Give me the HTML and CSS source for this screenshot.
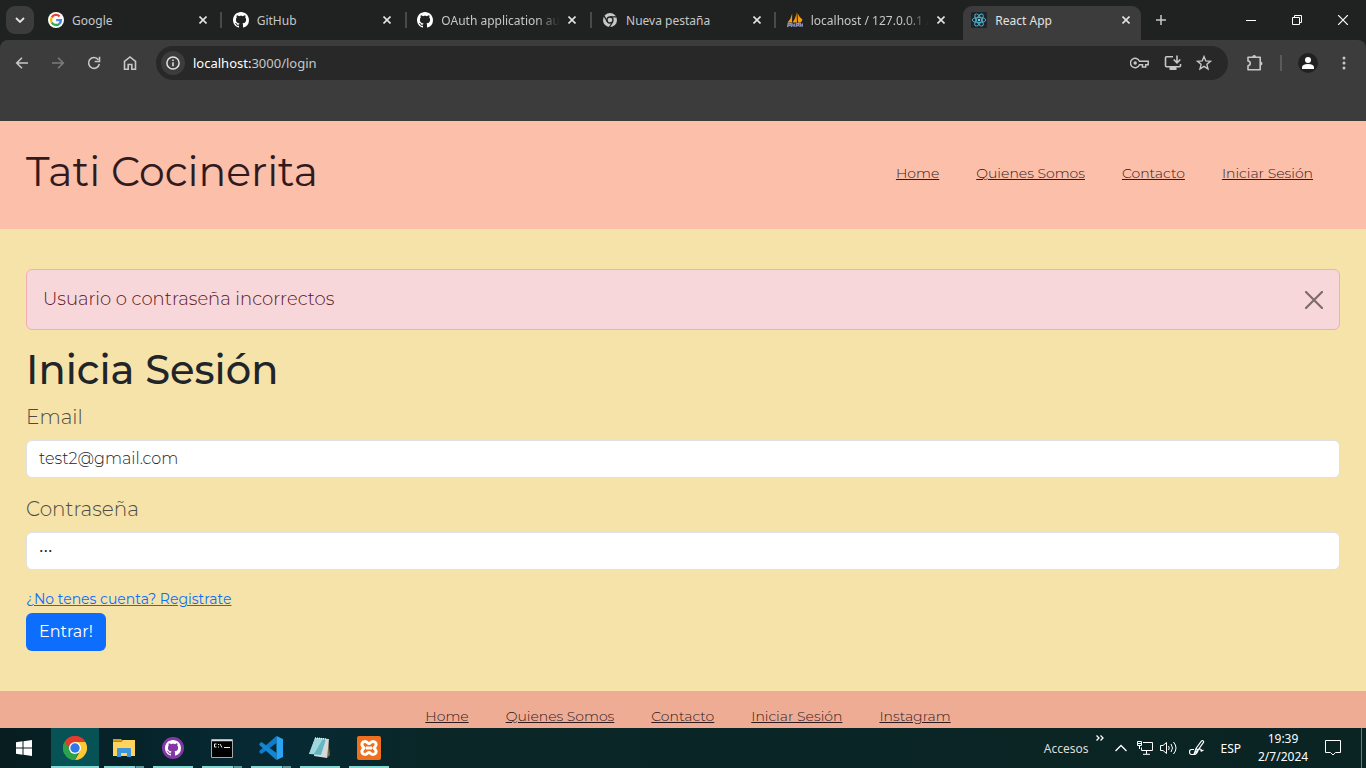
FILE: index.html
```html
<!DOCTYPE html>
<html lang="es">
<head>
<meta charset="utf-8">
<meta name="viewport" content="width=device-width, initial-scale=1">
<title>React App</title>
<link rel="stylesheet" href="styles.css">
</head>
<body>
<svg class="defs" aria-hidden="true">
  <symbol id="cross" viewBox="0 0 8 8"><path d="M.5.5l7 7M7.5.5l-7 7" fill="none" stroke="currentColor" stroke-width="1.6"/></symbol>
  <symbol id="github" viewBox="0 0 16 16"><path fill="currentColor" d="M8 0C3.58 0 0 3.58 0 8c0 3.54 2.29 6.53 5.47 7.59.4.07.55-.17.55-.38 0-.19-.01-.82-.01-1.49-2.01.37-2.53-.49-2.69-.94-.09-.23-.48-.94-.82-1.13-.28-.15-.68-.52-.01-.53.63-.01 1.08.58 1.23.82.72 1.21 1.87.87 2.33.66.07-.52.28-.87.51-1.07-1.78-.2-3.64-.89-3.64-3.95 0-.87.31-1.59.82-2.15-.08-.2-.36-1.02.08-2.12 0 0 .67-.21 2.2.82.64-.18 1.32-.27 2-.27s1.36.09 2 .27c1.53-1.04 2.2-.82 2.2-.82.44 1.1.16 1.92.08 2.12.51.56.82 1.27.82 2.15 0 3.07-1.87 3.75-3.65 3.95.29.25.54.73.54 1.48 0 1.07-.01 1.93-.01 2.2 0 .21.15.46.55.38A8.01 8.01 0 0 0 16 8c0-4.42-3.58-8-8-8z"/></symbol>
</svg>

<div class="browser">
  <div class="tabstrip">
    <button class="tab-search" aria-label="Buscar pestañas"><svg width="10" height="6" viewBox="0 0 10 6"><path d="M1 1l4 4 4-4" fill="none" stroke="#e3e3e3" stroke-width="1.8"/></svg></button>
    <div class="tabs">
      <div class="tab">
        <svg class="fav" viewBox="0 0 16 16"><circle cx="8" cy="8" r="8" fill="#fff"/><g fill="none" stroke-width="2.3"><path d="M11.6 4.4A5 5 0 0 0 3.7 5.5" stroke="#ea4335"/><path d="M3.7 5.5a5 5 0 0 0 0 5" stroke="#fbbc05"/><path d="M3.7 10.5a5 5 0 0 0 7.6 1.3" stroke="#34a853"/><path d="M11.3 11.8A5 5 0 0 0 13 8.1H8.2" stroke="#4285f4"/></g></svg>
        <span class="title">Google</span><button class="close" aria-label="Cerrar"><svg><use href="#cross"/></svg></button>
      </div>
      <i class="sep"></i>
      <div class="tab">
        <svg class="fav white"><use href="#github"/></svg>
        <span class="title">GitHub</span><button class="close" aria-label="Cerrar"><svg><use href="#cross"/></svg></button>
      </div>
      <i class="sep"></i>
      <div class="tab">
        <svg class="fav white"><use href="#github"/></svg>
        <span class="title fade">OAuth application aut</span><button class="close" aria-label="Cerrar"><svg><use href="#cross"/></svg></button>
      </div>
      <i class="sep"></i>
      <div class="tab">
        <svg class="fav" viewBox="0 0 16 16"><circle cx="8" cy="8" r="7" fill="#c7c7c7"/><circle cx="8" cy="8" r="3" fill="#c7c7c7" stroke="#202221" stroke-width="1.3"/><path d="M8 4.9h6.600M5.300 9.600L2 3.900M10.700 9.600l-3.300 5.700" stroke="#202221" stroke-width="1.2"/></svg>
        <span class="title">Nueva pestaña</span><button class="close" aria-label="Cerrar"><svg><use href="#cross"/></svg></button>
      </div>
      <i class="sep"></i>
      <div class="tab">
        <svg class="fav" viewBox="0 0 16 16"><path d="M.5 10.500Q4 7 5.200 1.500L5 10.500zM5.500 10.500Q9 6 9.500 0L10 10.500zM10.500 1Q12 5 15.500 7.500L14 10.500h-3z" fill="#f89c0e"/><path d="M.5 15l.7-3.500h2.300l-.5 2H1M5 11l-.5 4M7.500 11.500L7 15M5 13.200h2.300M9 15l.5-3.500h2.500l-.5 2H9.500M13.500 11l-.5 4M15.500 11.500L15 15M13.500 13.200h2" fill="none" stroke="#8c91bd" stroke-width="1.300"/></svg>
        <span class="title fade">localhost / 127.0.0.1 /</span><button class="close" aria-label="Cerrar"><svg><use href="#cross"/></svg></button>
      </div>
      <i class="sep hidden"></i>
      <div class="tab active">
        <svg class="fav" viewBox="0 0 16 16"><rect width="16" height="16" rx="1.500" fill="#20232a"/><g fill="none" stroke="#4fb8d0" stroke-width=".9"><ellipse cx="8" cy="8" rx="6.800" ry="2.600"/><ellipse cx="8" cy="8" rx="6.800" ry="2.600" transform="rotate(60 8 8)"/><ellipse cx="8" cy="8" rx="6.800" ry="2.600" transform="rotate(120 8 8)"/></g><circle cx="8" cy="8" r="1.200" fill="#61dafb"/></svg>
        <span class="title">React App</span><button class="close" aria-label="Cerrar"><svg><use href="#cross"/></svg></button>
      </div>
    </div>
    <button class="new-tab" aria-label="Nueva pestaña"><svg width="10" height="10" viewBox="0 0 10 10"><path d="M5 0v10M0 5h10" stroke="#c7c7c7" stroke-width="1.500"/></svg></button>
    <div class="window-buttons">
      <button aria-label="Minimizar"><svg width="10" height="10" viewBox="0 0 10 10"><path d="M0 5.500h10" stroke="#fff"/></svg></button>
      <button aria-label="Restaurar"><svg width="10" height="10" viewBox="0 0 10 10"><path d="M.5 2.500h7v7h-7zM2.500 2.500v-2h7v7h-2" fill="none" stroke="#fff"/></svg></button>
      <button aria-label="Cerrar ventana"><svg width="10" height="10" viewBox="0 0 10 10"><path d="M0 0l10 10M10 0L0 10" stroke="#fff" stroke-width="1.200"/></svg></button>
    </div>
  </div>
  <div class="toolbar">
    <div class="nav-buttons">
      <button aria-label="Atrás"><svg width="16" height="16" viewBox="0 0 16 16"><path d="M14 8H3M8 2.700L2.700 8 8 13.300" fill="none" stroke="#c7c7c7" stroke-width="1.600"/></svg></button>
      <button aria-label="Adelante"><svg width="16" height="16" viewBox="0 0 16 16"><path d="M2 8h11M8 2.700L13.300 8 8 13.300" fill="none" stroke="#7b7b7b" stroke-width="1.600"/></svg></button>
      <button aria-label="Recargar"><svg width="16" height="16" viewBox="0 0 16 16"><path d="M13.300 9A5.400 5.400 0 1 1 12.300 4.700M13.500 1.700v4.800H8.700" fill="none" stroke="#c7c7c7" stroke-width="1.600"/></svg></button>
      <button aria-label="Inicio"><svg width="16" height="16" viewBox="0 0 16 16"><path d="M2.500 14.200V6.500L8 2l5.500 4.500v7.700H9.800V9.500H6.200v4.700z" fill="none" stroke="#c7c7c7" stroke-width="1.600"/></svg></button>
    </div>
    <div class="omnibox">
      <button class="info" aria-label="Información del sitio"><svg width="14" height="14" viewBox="0 0 14 14"><circle cx="7" cy="7" r="6.100" fill="none" stroke="#e3e3e3" stroke-width="1.500"/><path d="M7 6.200v4M7 3.500v1.500" stroke="#e3e3e3" stroke-width="1.500"/></svg></button>
      <span class="url"><b>localhost:</b>3000/login</span>
      <button aria-label="Contraseñas"><svg width="20" height="12" viewBox="0 0 20 12"><path d="M9.500 4.200A4.700 4.700 0 1 0 9.500 7.800H12.500v2.200h3.200V7.800h2.500V4.200z" fill="none" stroke="#c7c7c7" stroke-width="1.500"/><circle cx="5.200" cy="6" r="1.700" fill="#c7c7c7"/></svg></button>
      <button aria-label="Instalar"><svg width="18" height="16" viewBox="0 0 18 16"><path d="M9 1.800H2.500q-1 0-1 1v8q0 1 1 1h13q1 0 1-1V9" fill="none" stroke="#c7c7c7" stroke-width="1.600"/><path d="M5.500 12h7v3h-7z" fill="#c7c7c7"/><path d="M13 .5V7.500M9.700 4.500L13 7.800l3.300-3.300" fill="none" stroke="#c7c7c7" stroke-width="1.600"/></svg></button>
      <button aria-label="Favorito"><svg width="16" height="16" viewBox="0 0 16 16"><path d="M8 1.600l1.800 4.300 4.700.4-3.600 3 1.100 4.600L8 11.400l-4 2.500 1.100-4.600-3.600-3 4.700-.4z" fill="none" stroke="#c7c7c7" stroke-width="1.400"/></svg></button>
    </div>
    <div class="actions">
      <button aria-label="Extensiones"><svg width="18" height="18" viewBox="0 0 18 18"><path d="M2 3.200h12.200v12.500H2v-4c3-.2 3-4.500 0-4.700z" fill="none" stroke="#c7c7c7" stroke-width="1.600" stroke-linejoin="round"/><path d="M6.300 3a1.900 1.900 0 0 1 3.800 0zM14.500 7.500a1.900 1.900 0 0 1 0 3.900z" fill="#c7c7c7"/></svg></button>
      <i class="divider"></i>
      <button class="avatar" aria-label="Perfil"><svg width="20" height="20" viewBox="0 0 20 20"><circle cx="10" cy="10" r="10" fill="#202221"/><circle cx="10" cy="7" r="3" fill="#fff"/><path d="M4 16v-1.500q0-3.500 6-3.500t6 3.500V16z" fill="#fff"/></svg></button>
      <button aria-label="Menú"><svg width="4" height="14" viewBox="0 0 4 14"><g fill="#c7c7c7"><circle cx="2" cy="2" r="1.500"/><circle cx="2" cy="7" r="1.500"/><circle cx="2" cy="12" r="1.500"/></g></svg></button>
    </div>
  </div>
</div>

<div class="viewport">
  <header class="site-header">
    <h1>Tati Cocinerita</h1>
    <nav class="links">
      <a href="#">Home</a><a href="#">Quienes Somos</a><a href="#">Contacto</a><a href="#">Iniciar Sesión</a>
    </nav>
  </header>
  <main>
    <div class="alert" role="alert">
      <span>Usuario o contraseña incorrectos</span>
      <button aria-label="Cerrar aviso"><svg width="18" height="18" viewBox="0 0 18 18"><path d="M1 1l16 16M17 1L1 17" stroke="#7b6b6d" stroke-width="2.200" stroke-linecap="round"/></svg></button>
    </div>
    <h1>Inicia Sesión</h1>
    <form>
      <label for="email">Email</label>
      <input id="email" type="email" value="test2@gmail.com">
      <label for="password">Contraseña</label>
      <input id="password" type="password" value="123">
      <a class="register" href="#">¿No tenes cuenta? Registrate</a>
      <button class="submit" type="button">Entrar!</button>
    </form>
  </main>
  <footer class="links">
    <a href="#">Home</a><a href="#">Quienes Somos</a><a href="#">Contacto</a><a href="#">Iniciar Sesión</a><a href="#">Instagram</a>
  </footer>
</div>

<div class="taskbar">
  <button class="start" aria-label="Inicio"><svg width="16" height="16" viewBox="0 0 16 16"><path d="M0 2.300L6.500 1.300v6.200H0zM7.500 1.200L16 0v7.500H7.500zM0 8.500h6.500v6.200L0 13.700zM7.500 8.500H16V16l-8.500-1.200z" fill="#fff"/></svg></button>
  <div class="apps">
    <button class="app current" aria-label="Chrome"><svg width="24" height="24" viewBox="0 0 24 24"><path d="M12 12L1.600 6A12 12 0 0 1 22.400 6z" fill="#e33b2e"/><path d="M12 12V24A12 12 0 0 1 1.600 6z" fill="#2da14c"/><path d="M12 6h10.400A12 12 0 0 1 12 24l5-9z" fill="#fcc934"/><path d="M1.600 6A12 12 0 0 1 22.400 6H12a6 6 0 0 0-5.500 3.500L5 11z" fill="#e33b2e"/><path d="M1.600 6l5.200 9q2 3 5.200 3l3-.8L12 24A12 12 0 0 1 1.600 6z" fill="#2da14c"/><circle cx="12" cy="12" r="6" fill="#fff"/><circle cx="12" cy="12" r="4.700" fill="#3078e8"/></svg></button>
    <button class="app grouped" aria-label="Explorador"><svg width="22" height="20" viewBox="0 0 22 20"><path d="M0 1h8l2 2H0z" fill="#d99b10"/><path d="M0 3h9l1-1h12v16H0z" fill="#ffd45c"/><path d="M0 3.500h9" stroke="#b98515"/><path d="M4 11q0-1 1-1h12q1 0 1 1v8h-4v-4H8v4H4z" fill="#3b96dc"/></svg></button>
    <button class="app" aria-label="GitHub Desktop"><svg width="22" height="22" viewBox="0 0 22 22"><circle cx="11" cy="11" r="11" fill="#8338a6"/><svg x="3" y="3" width="16" height="16" color="#fff"><use href="#github"/></svg></svg></button>
    <button class="app grouped" aria-label="Terminal"><svg width="22" height="19" viewBox="0 0 22 19"><path d="M.5.5h21v18H.5z" fill="#000" stroke="#a8a8a8"/><path d="M1 1.500h20" stroke="#ddd" stroke-width="1.500"/><path d="M5.500 5H3.500v3h2M7.500 5v1M7.500 7.500v1M9 5l2 3.500M13 8.500h6" fill="none" stroke="#eee"/></svg></button>
    <button class="app grouped" aria-label="VS Code"><svg width="24" height="24" viewBox="0 0 24 24"><path d="M17.500 0v7L2.500 18 .3 16.300v-1.200z" fill="#0e7cc9"/><path d="M17.500 24v-7L2.500 6 .3 7.700v1.200z" fill="#1287d6"/><path d="M17.500 0L24 3v18l-6.500 3z" fill="#29a3f2"/></svg></button>
    <button class="app" aria-label="Bloc de notas"><svg width="24" height="24" viewBox="0 0 24 24"><path d="M20 3l2 16-3 3-1-3z" fill="#796752"/><path d="M8 2l13 1-2 19-13-2z" fill="#d5d9d8"/><path d="M7 2l11 1-5 16-12-1z" fill="#63b7c3"/><path d="M7 2l8 .7L6 18H1z" fill="#a0d7da"/><path d="M7 2l11 1" stroke="#e3f1ee" stroke-width="1.500" stroke-dasharray="1 1"/></svg></button>
    <button class="app" aria-label="XAMPP"><svg width="24" height="24" viewBox="0 0 24 24"><rect width="24" height="24" rx="2" fill="#ee6f1e"/><path d="M8 5.500c-3 0-4 3-2.300 5L7 12l-1.300 1.500c-1.700 2-.7 5 2.300 5 2.500 0 2.500-2 4-2s1.500 2 4 2c3 0 4-3 2.300-5L17 12l1.300-1.500c1.700-2 .7-5-2.300-5-2.500 0-2.500 2-4 2s-1.500-2-4-2zM9 12h6" fill="none" stroke="#fff" stroke-width="3"/></svg></button>
  </div>
  <div class="tray">
    <span class="accesos">Accesos</span>
    <button class="more" aria-label="Más"><svg width="8" height="6" viewBox="0 0 8 6"><path d="M.5.5L3 3 .5 5.500M4.500.5L7 3 4.500 5.500" fill="none" stroke="#fff" stroke-width="1.300"/></svg></button>
    <button class="up" aria-label="Iconos ocultos"><svg width="12" height="8" viewBox="0 0 12 8"><path d="M.5 7L6 1.500 11.500 7" fill="none" stroke="#fff" stroke-width="1.300"/></svg></button>
    <svg width="16" height="14" viewBox="0 0 16 14"><path d="M6 1.500h9.500v8H4.500V6.500M9.500 10v3M6 13.300h7M.5.500h4v4h-4zM2.500 5v3M1 2.500h3" fill="none" stroke="#fff"/></svg>
    <svg width="17" height="14" viewBox="0 0 17 14"><path d="M.5 4.500h2.500L6.500 1.500v11L3 9.500H.5zM8.500 5q1.500 2 0 4M11 3q3 4 0 8M13.500 1q5 6 0 12" fill="none" stroke="#fff"/></svg>
    <svg class="pen" width="16" height="16" viewBox="0 0 16 16"><path d="M5.500 13L7 8.500 12.500 1q2-1 2.200 1L9 10zM5 9.500H2.500Q.5 9.500.5 12t2 2.500h2q3 0 4-3 1-2.500 2.500-2.500t1 1.500 2.500-.5M7 8.500L9 10" fill="none" stroke="#fff" stroke-width="1.200"/></svg>
    <span class="lang">ESP</span>
    <time class="clock" datetime="2024-07-02T19:39">19:39<br>2/7/2024</time>
    <button class="notes" aria-label="Notificaciones"><svg width="16" height="16" viewBox="0 0 16 16"><path d="M.5.5h15v12h-5L8 15l-2.500-2.500h-5z" fill="none" stroke="#fff"/></svg></button>
  </div>
</div>
</body>
</html>
```
FILE: styles.css
```css
* { box-sizing: border-box; }
body {
  margin: 0;
  height: 100vh;
  display: flex;
  flex-direction: column;
  overflow: hidden;
  font-family: Montserrat, Inter, sans-serif;
  font-weight: 300;
  color: #212529;
}
button { padding: 0; border: 0; background: none; font: inherit; color: inherit; display: flex; align-items: center; justify-content: center; }
svg { display: block; flex: none; }
.defs { position: absolute; width: 0; height: 0; }

/* Browser chrome */
.browser, .taskbar { font-family: "Segoe UI", "Noto Sans", sans-serif; font-weight: 400; flex: none; }
.browser { background: #202221; }
.tabstrip { display: flex; height: 40px; }
.tab-search { width: 28px; height: 28px; margin: 6px; border-radius: 9px; background: #3c3c3c; flex: none; }
.tabs { display: flex; flex: 0 1 1101px; min-width: 0; }
.tab { flex: 1 1 0; min-width: 0; display: flex; align-items: center; gap: 8px; padding: 0 11px 0 8px; margin-top: 6px; height: 28px; color: #c7c7c7; font-size: 12px; }
.tab.active { height: 34px; padding-bottom: 6px; background: #3c3c3c; border-radius: 9px 9px 0 0; color: #e3e3e3; }
.fav { width: 16px; height: 16px; }
.white { color: #fff; }
.title { flex: 1; min-width: 0; white-space: nowrap; }
.fade { -webkit-mask-image: linear-gradient(to right, #000 80%, transparent); mask-image: linear-gradient(to right, #000 80%, transparent); }
.close svg { width: 8px; height: 8px; color: #e3e3e3; }
.sep { flex: 0 0 7px; height: 16px; margin-top: 12px; background: linear-gradient(#494949, #494949) center / 2px 100% no-repeat; }
.sep.hidden { background: none; }
.new-tab { width: 40px; flex: none; }
.window-buttons { margin-left: auto; display: flex; }
.window-buttons button { width: 46px; }
.toolbar { height: 81px; padding: 6px 0 0; background: #3c3c3c; border-radius: 8px 8px 0 0; display: flex; align-items: flex-start; }
.nav-buttons { display: flex; height: 34px; gap: 20px; padding: 0 18px 0 14px; }
.omnibox { flex: 1; height: 34px; border-radius: 17px; background: #282828; display: flex; align-items: center; gap: 14px; padding: 0 16px 0 5px; }
.info { width: 24px; height: 24px; border-radius: 12px; background: #3c3c3c; }
.url { flex: 1; margin-left: -6px; font-size: 13px; color: #c7c7c7; }
.url b { font-weight: 400; color: #fff; }
.actions { display: flex; align-items: center; height: 34px; gap: 16px; padding: 0 20px 0 18px; }
.divider { width: 2px; height: 16px; background: #5a5a5a; }
.actions .avatar { margin-right: 8px; }

/* Page */
.viewport { flex: 1; min-height: 0; overflow: hidden; background: #f5e3a9; }
h1 { margin: 0 0 8px; font-size: 40px; line-height: 48px; font-weight: 500; }
.site-header { display: flex; align-items: center; justify-content: space-between; padding: 26px 53px 26px 26px; background: #fcbfa9; color: #301a1d; }
.site-header h1 { font-size: 41px; font-weight: 400; }
.links { font-size: 14px; line-height: 24px; }
.links a { color: #301a1d; }
nav.links { display: flex; gap: 37px; padding-bottom: 4px; }
main { padding: 40px 26px; }
.alert { display: flex; align-items: center; justify-content: space-between; padding: 16px; margin-bottom: 16px; border: 1px solid #f1aeb5; border-radius: 6px; background: #f8d7da; color: #58151c; font-size: 18px; line-height: 27px; }
form { display: flex; flex-direction: column; }
label { font-size: 20px; line-height: 30px; margin-bottom: 8px; color: #4e4b45; }
input { width: 100%; height: 38px; margin: 0 0 16px; padding: 5px 12px 7px; border: 1px solid #dee2e6; border-radius: 6px; background: #fff; color: #212529; font: inherit; font-size: 16px; }
.register { align-self: flex-start; font-size: 14px; line-height: 27px; font-weight: 400; color: #0d6efd; }
.submit { align-self: flex-start; height: 38px; padding: 0 13px 2px; border-radius: 6px; background: #0d6efd; color: #fff; font-size: 16px; font-weight: 400; }
footer.links { display: flex; justify-content: center; gap: 37px; padding: 13px 0 26px 10px; background: #efac95; }

/* Taskbar */
.taskbar { height: 40px; display: flex; background: linear-gradient(90deg, #071d20, #062a35 20%, #0a2626 32%, #0a2424); color: #fff; font-size: 12px; }
.start { width: 48px; margin-right: 3px; }
.apps { display: flex; gap: 1px; }
.app { width: 48px; height: 40px; background: linear-gradient(#84d6d3, #84d6d3) center bottom / 40px 2px no-repeat; }
.app.current { background: linear-gradient(#84d6d3, #84d6d3) center bottom / 100% 2px no-repeat #075255; }
.app.grouped { background-image: linear-gradient(90deg, #84d6d3 31px, #285c5f 31px, #285c5f 32px, #5d9a9b 32px); }
.tray { margin-left: auto; display: flex; align-items: center; border-right: 1px solid #67797a; margin-right: 4px; padding-right: 20px; }
.accesos { color: #ddd; }
.more { align-self: flex-start; margin: 7px 11px 0 8px; }
.up { margin-right: 10px; }
.tray > svg { margin-right: 7px; }
.tray > .pen { margin: 0 15px 0 5px; }
.clock { width: 50px; margin: 0 17px; text-align: center; line-height: 18px; }
```
